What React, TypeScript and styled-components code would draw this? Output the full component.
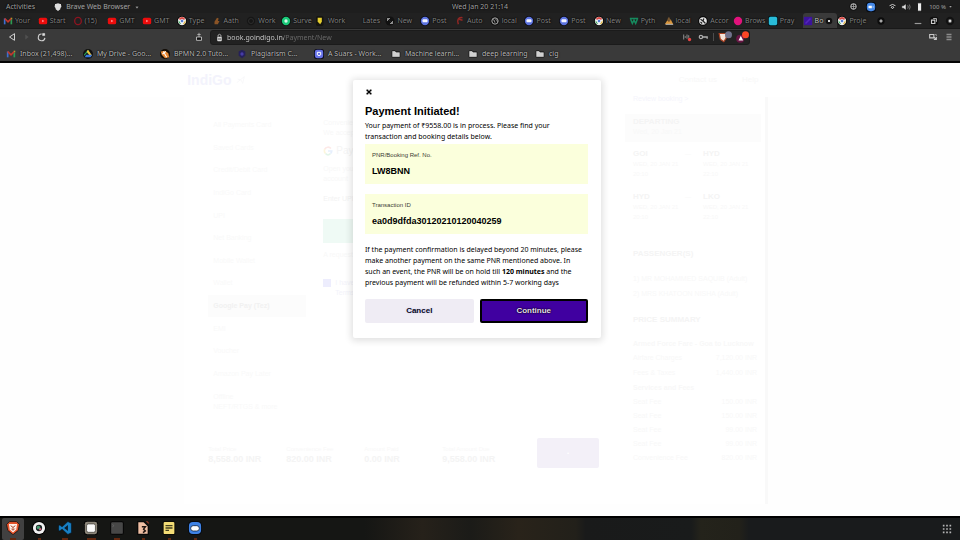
import React from 'react';
import styled, { createGlobalStyle } from 'styled-components';

const Global = createGlobalStyle`
  * { box-sizing: border-box; }
  body { margin: 0; background: #fff; font-family: "Liberation Sans", Arial, sans-serif; }
  button, input { font: inherit; color: inherit; border: 0; margin: 0; padding: 0; background: none; }
  button { cursor: pointer; }
  svg { display: block; flex: none; }
  h2, h3, p, ul, dl, dd, dt { margin: 0; padding: 0; }
  a { color: inherit; text-decoration: none; }
`;

const Screen = styled.div`
  min-height: 100vh;
  display: flex;
  flex-direction: column;
`;

/* ---------- desktop bar ---------- */
const DesktopBar = styled.header`
  height: 13px;
  display: grid;
  grid-template-columns: 1fr auto 1fr;
  align-items: center;
  padding: 0 6px;
  background: #1e1e1e;
  color: #a2a2a2;
  font: 7px/12px "Noto Sans", sans-serif;
  text-shadow: 0 0 2px #000, 0 0 1px #000;
`;
const BarGroup = styled.div<{ $gap: number; $end?: boolean }>`
  display: flex;
  align-items: center;
  gap: ${p => p.$gap}px;
  justify-content: ${p => (p.$end ? 'flex-end' : 'flex-start')};
`;
const AppMenu = styled.button`
  display: flex;
  align-items: center;
  gap: 3px;
`;
const BatteryMenu = styled(AppMenu)`
  && {
    gap: 1px;
    font-size: 6px;
  }
`;

/* ---------- browser ---------- */
const TabStrip = styled.nav`
  height: 16px;
  display: flex;
  align-items: stretch;
  padding-left: 3px;
  background: #212121;
  border-bottom: 1px solid #191919;
`;
const Tab = styled.button<{ $active?: boolean }>`
  && {
    flex: 1 1 0;
    min-width: 0;
    display: flex;
    align-items: center;
    gap: 2px;
    white-space: nowrap;
    border-radius: 3px 3px 0 0;
    background: ${p => (p.$active ? '#3a3a3a' : 'transparent')};
    color: ${p => (p.$active ? '#c4c4c4' : '#838383')};
    font: 7px/14px "Noto Sans", sans-serif;
    text-shadow: 0 0 2px #000, 0 0 1px #000;
  }
`;
const WindowControls = styled.div`
  flex: 0 0 88px;
  display: flex;
  align-items: center;
  justify-content: flex-end;
  gap: 6px;
  padding-right: 5px;
`;
const NewTab = styled.button`
  && {
    margin-right: auto;
    padding-left: 5px;
  }
`;
const AddressBar = styled.div`
  height: 16px;
  display: flex;
  align-items: center;
  background: #3a3a3a;
`;
const NavButtons = styled.div`
  flex: 0 1 210px;
  display: flex;
  align-items: center;
  gap: 5px;
  padding: 0 6px 0 7px;
`;
const SaveButton = styled.button`
  && { margin-left: auto; }
`;
const UrlField = styled.div`
  flex: 0 1 540px;
  height: 15px;
  display: flex;
  align-items: center;
  gap: 3px;
  padding: 0 0 0 4px;
  border-radius: 3px;
  background: #222;
  border: 1px solid #1b1b1b;
`;
const UrlInput = styled.input`
  && {
    flex: 1;
    min-width: 0;
    height: 13px;
    outline: 0;
    font: 7px/13px "Noto Sans", sans-serif;
    color: transparent;
    background: linear-gradient(90deg, #d0d0d0 57px, #6c6c6c 57px);
    background-clip: text;
  }
`;
const Divider = styled.span`
  width: 1px;
  height: 8px;
  margin: 0 1px 0 2px;
  background: #4d4d4d;
`;
const BrowserActions = styled.div`
  margin-left: auto;
  display: flex;
  gap: 6px;
  padding-right: 6px;
`;
const Bookmarks = styled.nav`
  height: 18px;
  display: flex;
  align-items: center;
  padding: 2px 0 0 6px;
  background: #3a3a3a;
  border-bottom: 2px solid #050505;
`;
const Bookmark = styled.a<{ $w: number }>`
  && {
    flex: 0 0 ${p => p.$w}px;
    display: flex;
    align-items: center;
    gap: 4px;
    white-space: nowrap;
    color: #bcbcbc;
    font: 7px/14px "Noto Sans", sans-serif;
    text-shadow: 0 0 2px #000, 0 0 1px #000;
  }
`;

/* ---------- web page behind the dialog ---------- */
const Page = styled.main`
  position: relative;
  flex: 1;
  display: flex;
  flex-direction: column;
  background: #fefefe;
  color: #f8f8f8;
  font-size: 7px;
  line-height: 10px;
`;
const SiteHeader = styled.div`
  height: 34px;
  display: flex;
  align-items: center;
  justify-content: space-between;
  padding: 0 21% 0 19.5%;
  background: #fff;
`;
const Logo = styled.a`
  && {
    display: flex;
    align-items: center;
    gap: 4px;
    color: #f3f3fc;
    font-size: 14px;
    font-weight: 700;
    line-height: 16px;
  }
`;
const SiteLinks = styled.div`
  display: flex;
  gap: 25px;
  font-size: 8px;
`;
const Columns = styled.div`
  flex: 1;
  display: flex;
  padding: 0 20% 12px 19.2%;
`;
const Booking = styled.section`
  flex: 1;
  display: flex;
  flex-direction: column;
  padding: 17px 21px 0 24px;
  background: #fff;
`;
const Payment = styled.div`
  display: grid;
  grid-template-columns: 98px 1fr;
  gap: 17px;
`;
const Methods = styled.ul`
  list-style: none;
  display: grid;
  grid-auto-rows: 1fr;
  min-height: 271px;
`;
const Method = styled.li<{ $on?: boolean }>`
  display: flex;
  align-items: center;
  padding-left: 5px;
  background: ${p => (p.$on ? '#fcfcfc' : 'transparent')};
  color: ${p => (p.$on ? '#f1f1f1' : '#f9f9f9')};
  font-weight: ${p => (p.$on ? 700 : 400)};
`;
const MethodNote = styled.p`
  && {
    padding: 7px 0 0 5px;
    color: #f9f9f9;
  }
`;
const PayPanel = styled.div`
  display: flex;
  flex-direction: column;
  align-items: flex-start;
  padding-top: 4px;
`;
const GPay = styled.div`
  display: flex;
  align-items: center;
  gap: 3px;
  height: 26px;
  color: #f5f5f5;
  font-size: 10px;
`;
const UpiLabel = styled.p`
  && {
    margin: 10px 0 15px;
    color: #f3f3f3;
  }
`;
const VerifyButton = styled.button`
  && {
    width: 108px;
    height: 24px;
    margin-bottom: 7px;
    background: #effaf5;
    color: #fff;
  }
`;
const Terms = styled.label`
  display: flex;
  gap: 4px;
  margin-top: 18px;
  color: #f3f3fa;
`;
const TermsBox = styled.input`
  && {
    appearance: none;
    width: 8px;
    height: 8px;
    margin-top: 1px;
    background: #ededfd;
  }
`;
const Totals = styled.div`
  display: grid;
  grid-template-columns: 78px 78px 78px 1fr 62px;
  align-items: center;
  margin-top: 26px;
  font-size: 6px;
  line-height: 9px;
`;
const TotalValue = styled.strong`
  display: block;
  color: #f4f4f4;
  font-size: 9px;
  line-height: 10px;
`;
const Total = styled.div`
  padding-top: 2px;
`;
const PayButton = styled.button`
  && {
    height: 30px;
    border-radius: 2px;
    background: #f3f0f8;
    color: #fff;
  }
`;
const Sidebar = styled.aside`
  flex: 0 0 148px;
  padding: 0 4px 0 5px;
  background: #fff;
  border-right: 3px solid #f9f9f9;
`;
const Inset = styled.div<{ $top: number }>`
  padding: 0 4px 0 8px;
  margin-top: ${p => p.$top}px;
`;
const SidebarLink = styled.a`
  && { color: #f5f5fc; }
`;
const Departing = styled.div`
  margin-top: 10px;
  padding: 3px 8px 5px;
  background: #fcfcfc;
`;
const Heading = styled.h3`
  && {
    color: #f4f4f4;
    font-size: 8px;
    line-height: 10px;
  }
`;
const Leg = styled.div<{ $top: number }>`
  display: grid;
  grid-template-columns: 52px 18px 1fr;
  padding-left: 8px;
  margin-top: ${p => p.$top}px;
  font-size: 6px;
`;
const Line = styled.div<{ $h: number }>`
  display: flex;
  justify-content: space-between;
  white-space: nowrap;
  font-size: 7px;
  line-height: ${p => p.$h}px;
`;

/* ---------- dialog ---------- */
const Overlay = styled.div`
  position: absolute;
  inset: 0;
  display: flex;
  justify-content: center;
  align-items: flex-start;
  padding: 17px 6px 0 0;
`;
const Dialog = styled.div`
  width: 248px;
  padding: 8px 13px 15px 12px;
  background: #fff;
  border-radius: 2px;
  box-shadow: 0 1px 7px 2px rgba(0, 0, 0, 0.12);
  color: #000;
`;
const CloseButton = styled.button`
  && {
    display: block;
    width: 8px;
    height: 8px;
  }
`;
const Title = styled.h2`
  && {
    margin-top: 8px;
    font-size: 11px;
    line-height: 14px;
  }
`;
const Copy = styled.p<{ $top: number }>`
  && {
    margin-top: ${p => p.$top}px;
    padding-right: 4px;
    font: 7px/11px "Noto Sans", sans-serif;
  }
`;
const Detail = styled.div<{ $top: number }>`
  margin-top: ${p => p.$top}px;
  height: 40px;
  padding: 6px 7px;
  background: #fbffdc;
`;
const DetailLabel = styled.p`
  && {
    color: #3c3c34;
    font-size: 6px;
    line-height: 10px;
  }
`;
const DetailValue = styled.p`
  && {
    margin-top: 5px;
    font-size: 9px;
    font-weight: 700;
    line-height: 12px;
  }
`;
const Actions = styled.div`
  display: grid;
  grid-template-columns: 1fr 1fr;
  gap: 6px;
  margin-top: 11px;
`;
const ActionButton = styled.button<{ $primary?: boolean }>`
  && {
    height: 24px;
    border-radius: 2px;
    border: ${p => (p.$primary ? '2px solid #000' : '0')};
    background: ${p => (p.$primary ? '#4000a0' : '#efecf4')};
    color: ${p => (p.$primary ? '#e4dcf2' : '#080818')};
    text-shadow: ${p => (p.$primary ? '0 0 2px #000, 0 0 1px #000' : '0 0 2px #c8c8ff')};
    font-size: 8px;
    font-weight: 700;
    line-height: 12px;
  }
`;

/* ---------- dock ---------- */
const Dock = styled.footer`
  height: 24px;
  display: flex;
  align-items: stretch;
  gap: 4px;
  padding: 0 8px 0 2px;
  border-top: 2px solid #000;
  background: linear-gradient(90deg, #151614 38%, #26211a 44%, #1b1b18 49%, #29231a 54%, #22201a 60%, #191a1a 61%, #191b1b 72%, #24231b 73%, #22211a 77%, #191b1c 78%);
`;
const DockItem = styled.button<{ $on?: boolean }>`
  && {
    width: 22px;
    display: flex;
    flex-direction: column;
    align-items: center;
    justify-content: space-between;
    padding-top: 3px;
    background: ${p => (p.$on ? '#414141' : 'transparent')};
    border-radius: 2px;
  }
`;
const Dots = styled.span<{ $n: number }>`
  width: ${p => p.$n * 3}px;
  height: 2px;
  background: #63270f;
`;
const DockEnd = styled.button`
  && { margin-left: auto; }
`;

/* ---------- icons ---------- */
const Icon = ({ name, size = 10 }: { name: string; size?: number }) => (
  <svg width={size} height={size} viewBox="0 0 12 12" fill="none" aria-hidden="true">
    {shapes[name]}
  </svg>
);

const shapes: Record<string, React.ReactNode> = {
  gmail: <><path d="M2 10V3" stroke="#3d6fd0" strokeWidth="2" /><path d="M10 10V3" stroke="#2e9a52" strokeWidth="2" /><path d="M2 3l4 4 4-4" stroke="#c5362c" strokeWidth="2" /><path d="M9 2h2v2z" fill="#e6b32b" /></>,
  youtube: <><rect x="1" y="2" width="10" height="8" rx="2" fill="#ed0c0c" /><path d="M5 4.4v3.2L7.6 6z" fill="#ff9a9a" /></>,
  opera: <ellipse cx="6" cy="6" rx="4" ry="4.4" stroke="#8c1420" strokeWidth="1.6" />,
  chrome: <><circle cx="6" cy="6" r="6" fill="#000" /><circle cx="6" cy="6" r="5" fill="#f0f0f0" /><path d="M2 4a4.4 4.4 0 018-.2L6 5z" fill="#d84a45" /><path d="M2 5l3 5a4.4 4.4 0 01-3-5z" fill="#39a35a" /><path d="M7 10l3-5c1 3-1 5-3 5z" fill="#e3b73f" /><circle cx="6" cy="6" r="2" fill="#567fd4" stroke="#fff" strokeWidth=".7" /></>,
  drive: <><circle cx="6" cy="6" r="6" fill="#111" /><path d="M6 1l2.500 4H4L2 8 1 7z" fill="#2da45a" /><path d="M6 1l5 7H8L4.500 3z" fill="#ecc13b" /><path d="M2 10l1.800-3H11l-1.800 3z" fill="#3a78db" /></>,
  hand: <path d="M3 10V7l3-5 2 1-1 3h2l-2 4z" fill="#8b5426" />,
  dark: <><circle cx="6" cy="6" r="5" fill="#161616" /><circle cx="6" cy="6" r="3" stroke="#303030" /></>,
  green: <><circle cx="6" cy="6" r="6" fill="#0b120e" /><circle cx="6" cy="6" r="5" fill="#19c878" /><circle cx="6" cy="6" r="2" fill="#d5f8e8" /></>,
  yellow: <><rect width="9" height="12" rx="2" fill="#151510" /><path d="M2 2h5v5L5 10 2 7z" fill="#e6cf2f" /></>,
  none: null,
  arrows: <><circle cx="6" cy="6" r="5.500" fill="#111" /><path d="M3 6V3h3M9 6v3H6M3 3l2 2M9 9L7 7" stroke="#aaa" /></>,
  zoom: <><circle cx="6" cy="6" r="6" fill="#0a0a14" /><circle cx="6" cy="6" r="5" fill="#5b72df" /><rect x="3" y="4" width="6" height="3.500" rx="1" fill="#f4f5ff" /></>,
  red: <path d="M9 2C4 1 2 5 4 10M5 4l4 1" stroke="#942724" strokeWidth="1.800" />,
  globe: <><circle cx="6" cy="6" r="5.500" fill="#0d0d0d" /><circle cx="6" cy="6" r="3.800" stroke="#aaa" strokeWidth="1.200" /><path d="M3 4l2 1 1 3M6 3l2 2 1 2" stroke="#aaa" /></>,
  teal: <path d="M1 3h10M2 4l2 5 2-4 2 4 2-5" stroke="#168a5e" strokeWidth="1.800" />,
  cloud: <><path d="M1 10l3-5 2 2 2-3 3 6z" fill="#d7953d" /><path d="M6 1l2 4-2 2-2-3z" fill="#7a5932" /><path d="M2 10h9" stroke="#cfcfcf" /></>,
  ball: <><circle cx="6" cy="6" r="6" fill="#0a0a0a" /><circle cx="6" cy="6" r="4.600" fill="#e5e5e5" /><path d="M3 4l3 2 1-3M6 6l3 3M5 9L3 7" stroke="#222" strokeWidth="1.500" /></>,
  pink: <circle cx="6" cy="6" r="5" fill="#e2127c" />,
  cyan: <><rect width="12" height="12" rx="2" fill="#05191d" /><rect x="1" y="1" width="10" height="10" rx="2" fill="#29bcd9" /></>,
  indigo: <><rect x="1" y="1" width="10" height="10" fill="#3c139c" /><path d="M3 9l6-6" stroke="#5426bb" strokeWidth="2" /></>,
  orange: <><circle cx="6" cy="6" r="6" fill="#120c06" /><path d="M1 3l5-1 4 3 1 5-5 1-4-4z" fill="#e88732" /><path d="M4 3l4 7M3 6l4-3" stroke="#fff" strokeWidth="1.300" /></>,
  purple: <><path d="M6 1l4 2v5l-4 3-4-3V3z" fill="#25205b" /><circle cx="6" cy="6" r="2" fill="#473ca8" /></>,
  app: <><rect width="12" height="12" rx="3" fill="#0a0a18" /><rect x="1" y="1" width="10" height="10" rx="2.500" fill="#6672e8" /><path d="M4 4v3q2 2 4 0V4z" stroke="#fff" strokeWidth="1.200" /></>,
  folder: <path d="M1 3q0-1 1-1h3l1 1.500h4q1 0 1 1V9q0 1-1 1H2q-1 0-1-1z" fill="#d0d0d0" stroke="#0c0c0c" strokeWidth="1" />,
  shield: <path d="M6 1l4 1 .6 3L9 9l-3 2.500L3 9 1.400 5 2 2z" fill="#dedede" stroke="#080808" />,
  caret: <path d="M3 5h6L6 8.500z" fill="#d0d0d0" stroke="#0a0a0a" />,
  wheel: <><circle cx="6" cy="6" r="5.500" fill="#111" /><circle cx="6" cy="6" r="3.500" stroke="#a8a8a8" strokeWidth="1.400" /><path d="M2 6h8M6 2v8" stroke="#a8a8a8" /></>,
  zoomBar: <><rect width="12" height="12" rx="4" fill="#060a10" /><rect x="1" y="1" width="10" height="10" rx="4" fill="#4589e8" /><path d="M3 4.500h4v3H3zM7.500 6L9 5v2z" fill="#fff" /></>,
  zoomDock: <><rect width="12" height="12" rx="4" fill="#060a10" /><rect x=".8" y=".8" width="10.400" height="10.400" rx="3.500" fill="#3f83e6" /><rect x="2.300" y="4" width="7.400" height="4.600" rx="2.200" fill="#fff" stroke="#10243f" strokeWidth=".7" /></>,
  wifi: <><path d="M1 5q5-5 10 0L6 11z" fill="#0b0b0b" /><path d="M2 5q4-3.500 8 0M4 7q2-1.500 4 0L6 9z" stroke="#ddd" strokeWidth="1.300" /></>,
  sound: <><path d="M1 4.500h2L6 2v8L3 7.500H1z" fill="#e5e5e5" stroke="#080808" strokeWidth=".6" /><path d="M8 4q1.500 2 0 4M10 3q2 3 0 6" stroke="#858585" /></>,
  battery: <rect x="3" y="1" width="5" height="10" rx="1" fill="#eee" stroke="#080808" />,
  close: <><circle cx="6" cy="6" r="5" fill="#111" /><path d="M4.500 4.500l3 3M7.500 4.500l-3 3" stroke="#ddd" strokeWidth="1.500" /></>,
  plus: <><circle cx="6" cy="6" r="5.500" fill="#0c0c0c" /><path d="M6 3.500v5M3.500 6h5" stroke="#ddd" strokeWidth="1.500" /></>,
  minimise: <path d="M2 9h8" stroke="#999" strokeWidth="1.400" />,
  restore: <><rect x="1" y="1" width="10" height="10" rx="3" fill="#101010" /><path d="M3 5h4v4H3z" stroke="#ccc" strokeWidth="1.400" /><path d="M5 3h4v4" stroke="#ccc" /></>,
  back: <path d="M9 2v8L3 6z" stroke="#d0d0d0" strokeWidth="1.200" />,
  forward: <path d="M4 3v6l4-3z" fill="#505050" />,
  reload: <><path d="M9.500 7A4 4 0 116 2.500" stroke="#d0d0d0" strokeWidth="1.300" /><path d="M6 1h4v4H6z" fill="#ddd" stroke="#111" strokeWidth=".6" /></>,
  save: <><path d="M6 1v5M4 3h4" stroke="#b8b8b8" /><path d="M3 6h6v4H3z" stroke="#ccc" fill="#111" /></>,
  lock: <><path d="M4 5V3q2-2.500 4 0v2" stroke="#bbb" strokeWidth="1.200" /><rect x="3" y="5" width="6" height="6" rx="1" fill="#d8d8d8" /><path d="M4 8h4" stroke="#222" /></>,
  noSound: <><path d="M2 3v6M4 5v2M6 3v5M8 4v3" stroke="#858585" strokeWidth="1.300" /><circle cx="9" cy="9" r="2" fill="#e84444" /></>,
  key: <><circle cx="3.500" cy="6" r="2" stroke="#b0b0b0" strokeWidth="1.400" /><path d="M5 6h6v2" stroke="#b0b0b0" strokeWidth="1.600" /></>,
  brave: <><path d="M1 3h6v4L5 10 2 8z" fill="#f4e3d9" stroke="#aa4223" /><circle cx="9" cy="4" r="3" fill="#70728b" /></>,
  reward: <><circle cx="4.500" cy="7.500" r="3.500" fill="#681544" /><path d="M3 9l2-4 2 4z" fill="#fff" /><circle cx="9" cy="4" r="3" fill="#fb4626" /></>,
  share: <><path d="M2 3h5v4H2zM7 6l3 3M7 9h3V6" stroke="#c8c8c8" strokeWidth="1.300" /><path d="M8 3h2v2" stroke="#999" /></>,
  menu: <path d="M3 3h6M3 6h6M3 9h6" stroke="#8c8c8c" strokeWidth="1.700" />,
  dialogClose: <><rect x="2" y="2" width="8" height="8" fill="#ddd" /><path d="M2.500 2.500l7 7M9.500 2.500l-7 7" stroke="#000" strokeWidth="2" /></>,
  g: <><path d="M9.500 3A4.500 4.500 0 002 4" stroke="#fde9e8" strokeWidth="2" /><path d="M2 4q-1 3 1 5" stroke="#fdf6dc" strokeWidth="2" /><path d="M3 9q3 3 6 0" stroke="#e3f5e9" strokeWidth="2" /><path d="M6 6h4.500q0 2-1.500 3" stroke="#e6effd" strokeWidth="2" /></>,
  plane: <path d="M1 9l9-7-2 8-2-4-4-1" stroke="#f6f6f9" />,
  braveDock: <><path d="M3 .5h6L11.500 3l-1 5L6 11.700 1.500 8l-1-5z" fill="#e4532b" stroke="#080808" strokeWidth=".6" /><path d="M2.500 2.500h7l-.7 4.700L6 9.800 3.200 7.200z" fill="#fff2ec" /><path d="M4 4l2 1.500L8 4M6 5.500v2M4.500 6.500L6 8l1.500-1.500" stroke="#a63c20" strokeWidth=".8" /></>,
  ringDock: <><circle cx="6" cy="6" r="6" fill="#000" /><circle cx="6" cy="6" r="5.200" fill="#f2f2f2" /><circle cx="6" cy="6" r="2.700" fill="#1d2326" /><circle cx="5.500" cy="5.500" r="1.500" fill="#4a9b72" /><circle cx="7" cy="7" r="1" fill="#c9647a" /></>,
  code: <><path d="M8.500.5L11.500 2v8l-3 1.500L3.500 7 1.500 8.500.5 8V4l1-.5L3.500 5z" fill="#187fc4" stroke="#04121d" strokeWidth=".5" /><path d="M8.500 3.500v5L5.300 6z" fill="#0b1d2b" /></>,
  files: <><rect width="12" height="12" rx="2" fill="#050505" /><rect x=".7" y=".7" width="10.600" height="10.600" rx="2" fill="#8d877b" /><rect x="2.200" y="2.500" width="7.600" height="7.200" rx="1.500" fill="#fafafa" stroke="#3b3934" strokeWidth=".6" /></>,
  terminal: <><rect x=".5" y=".5" width="11" height="11" rx="1.500" fill="#474747" stroke="#080808" /><path d="M2 3l1.500 1L2 5" stroke="#656565" strokeWidth=".7" /></>,
  doc: <><path d="M1 0h6l4 4v8H1z" fill="#080808" /><path d="M2 1h4.500L10 4.500V11H2z" fill="#f0bfa4" /><path d="M5 5h3L6.500 7 8 8.500 6 10" stroke="#201410" strokeWidth="1.300" /><path d="M9 0l2 2" stroke="#8f3320" /></>,
  notes: <><rect x=".5" width="11" height="12" rx="1.500" fill="#0c0b05" /><rect x="1.400" y=".8" width="9.200" height="10.400" rx="1" fill="#f3dc76" /><path d="M3 4h6M3 6h6M3 8h3" stroke="#44401f" strokeWidth="1.100" /></>,
  grid: <path d="M1 2h2M5 2h2M9 2h2M1 6h2M5 6h2M9 6h2M1 10h2M5 10h2M9 10h2" stroke="#b5b5b5" strokeWidth="2" />,
};

const tabs: [string, string][] = [
  ['gmail', 'Your'], ['youtube', 'Start'], ['opera', '(15)'], ['youtube', 'GMT'], ['youtube', 'GMT'],
  ['chrome', 'Type'], ['hand', 'Aath'], ['dark', 'Work'], ['green', 'Surve'], ['yellow', 'Work'],
  ['none', 'Lates'], ['arrows', 'New'], ['zoom', 'Post'], ['red', 'Auto'], ['globe', 'local'],
  ['zoom', 'Post'], ['zoom', 'Post'], ['chrome', 'New'], ['teal', 'Pyth'], ['cloud', 'local'],
  ['ball', 'Accor'], ['pink', 'Brows'], ['cyan', 'Pray'], ['indigo', 'Bo'], ['chrome', 'Proje'],
];
const bookmarks: [string, string, number][] = [
  ['gmail', 'Inbox (21,498)...', 77], ['drive', 'My Drive - Goo...', 77], ['orange', 'BPMN 2.0 Tuto...', 77],
  ['purple', 'Plagiarism C...', 77], ['app', 'A Suars - Work...', 77], ['folder', 'Machine learni...', 77],
  ['folder', 'deep learning', 67], ['folder', 'cig', 30],
];
const methods = ['All Payments Card', 'Saved Cards', 'Credit/Debit Card', 'IndiGo Card', 'UPI', 'Net Banking', 'Mobile Wallet', 'Wallet', 'Google Pay (Tez)', 'EMI', 'Voucher', 'Amazon Pay Later'];
const fares: [string, string][] = [['Seat Fee', '150.00 INR'], ['Seat Fee', '150.00 INR'], ['Seat Fee', '99.00 INR'], ['Seat Fee', '99.00 INR'], ['Convenience Fee', '820.00 INR']];
const totals: [string, string][] = [['Total Price', '8,558.00 INR'], ['Convenience Fee', '820.00 INR'], ['Amount Paid', '0.00 INR'], ['Total Amount Due', '9,558.00 INR']];
const dock: [string, string, number][] = [
  ['braveDock', 'Brave', 2], ['ringDock', 'Media', 1], ['code', 'Code editor', 2], ['files', 'Files', 3],
  ['terminal', 'Terminal', 2], ['doc', 'Documents', 1], ['notes', 'Notes', 1], ['zoomDock', 'Zoom', 1],
];

const FlightLeg = ({ from, to, top }: { from: string; to: string; top: number }) => (
  <Leg $top={top}>
    <div><Heading>{from}</Heading>WED, 20 JAN 21<br />20:10</div>
    <span>—</span>
    <div><Heading>{to}</Heading>WED, 20 JAN 21<br />22:10</div>
  </Leg>
);

export default function App() {
  return (
    <Screen>
      <Global />
      <DesktopBar>
        <BarGroup $gap={18}>
          <span>Activities</span>
          <AppMenu><Icon name="shield" size={10} /> Brave Web Browser <Icon name="caret" size={8} /></AppMenu>
        </BarGroup>
        <span>Wed Jan 20 21:14</span>
        <BarGroup $gap={4} $end>
          <Icon name="wheel" size={9} />
          <span />
          <Icon name="zoomBar" size={10} />
          <span /><span />
          <Icon name="wifi" size={9} />
          <Icon name="sound" size={10} />
          <Icon name="battery" size={10} />
          <BatteryMenu>100 % <Icon name="caret" size={7} /></BatteryMenu>
        </BarGroup>
      </DesktopBar>

      <TabStrip>
        {tabs.map(([icon, label], i) => (
          <Tab key={i} $active={label === 'Bo'}>
            <Icon name={icon} />
            <span>{label}</span>
            {label === 'Bo' && <Icon name="close" size={8} />}
          </Tab>
        ))}
        <WindowControls>
          <NewTab aria-label="New tab"><Icon name="plus" size={8} /></NewTab>
          <button aria-label="Minimise"><Icon name="minimise" /></button>
          <button aria-label="Restore"><Icon name="restore" /></button>
          <button aria-label="Close"><Icon name="close" /></button>
        </WindowControls>
      </TabStrip>

      <AddressBar>
        <NavButtons>
          <button aria-label="Back"><Icon name="back" /></button>
          <button aria-label="Forward"><Icon name="forward" /></button>
          <button aria-label="Reload"><Icon name="reload" /></button>
          <SaveButton aria-label="Bookmark"><Icon name="save" /></SaveButton>
        </NavButtons>
        <UrlField>
          <Icon name="lock" size={9} />
          <UrlInput aria-label="Address" defaultValue="book.goindigo.in/Payment/New" />
          <Icon name="noSound" />
          <span />
          <Icon name="key" />
          <Divider />
          <Icon name="brave" size={14} />
          <Icon name="reward" size={14} />
        </UrlField>
        <BrowserActions>
          <button aria-label="Share"><Icon name="share" /></button>
          <button aria-label="Menu"><Icon name="menu" /></button>
        </BrowserActions>
      </AddressBar>

      <Bookmarks>
        {bookmarks.map(([icon, label, w]) => (
          <Bookmark key={label} href="#" $w={w}><Icon name={icon} />{label}</Bookmark>
        ))}
      </Bookmarks>

      <Page>
        <SiteHeader>
          <Logo href="#">IndiGo <Icon name="plane" /></Logo>
          <SiteLinks><a href="#">Contact us</a><a href="#">Help</a></SiteLinks>
        </SiteHeader>
        <Columns>
          <Booking>
            <Payment>
              <div>
                <Methods>
                  {methods.map(m => <Method key={m} $on={m.startsWith('Google')}>{m}</Method>)}
                </Methods>
                <MethodNote>Offline<br />NEFT/RTGS &amp; more</MethodNote>
              </div>
              <PayPanel>
                <p>Convenient<br />We accept</p>
                <GPay><Icon name="g" /> Pay</GPay>
                <p>Open your<br />account</p>
                <UpiLabel>Enter UPI</UpiLabel>
                <VerifyButton>Verify</VerifyButton>
                <p>A request</p>
                <Terms><TermsBox type="checkbox" /><span>I have<br />Terms</span></Terms>
              </PayPanel>
            </Payment>
            <Totals>
              {totals.map(([label, value]) => <Total key={label}>{label}<TotalValue>{value}</TotalValue></Total>)}
              <PayButton>•</PayButton>
            </Totals>
          </Booking>
          <Sidebar>
            <Inset $top={-3}><SidebarLink href="#">Review booking &gt;</SidebarLink></Inset>
            <Departing><Heading>DEPARTING</Heading>Wed, 20 Jan 21</Departing>
            <FlightLeg from="GOI" to="HYD" top={7} />
            <FlightLeg from="HYD" to="LKO" top={13} />
            <Inset $top={27}>
              <Heading>PASSENGER(S)</Heading>
            </Inset>
            <Inset $top={12}>
              <Line $h={15}>1) MR MOHAMMED SAQUIB (Adult)</Line>
              <Line $h={15}>2) MRS KHATOON NISHA (Adult)</Line>
            </Inset>
            <Inset $top={14}><Heading>PRICE SUMMARY</Heading></Inset>
            <Inset $top={12}>
              <Line $h={14}><strong>Armed Force Fare - Goa to Lucknow</strong></Line>
              <Line $h={14}><span>Airfare Charges</span><span>7,120.00 INR</span></Line>
              <Line $h={15}><span>Fees &amp; Taxes</span><span>1,440.00 INR</span></Line>
              <Line $h={15}><strong>Services and Fees</strong></Line>
              {fares.map(([label, value], i) => <Line key={i} $h={14}><span>{label}</span><span>{value}</span></Line>)}
            </Inset>
          </Sidebar>
        </Columns>

        <Overlay>
          <Dialog role="dialog" aria-labelledby="dialog-title">
            <CloseButton aria-label="Close dialog"><Icon name="dialogClose" size={8} /></CloseButton>
            <Title id="dialog-title">Payment Initiated!</Title>
            <Copy $top={2}>Your payment of ₹9558.00 is in process. Please find your transaction and booking details below.</Copy>
            <Detail $top={2}>
              <DetailLabel>PNR/Booking Ref. No.</DetailLabel>
              <DetailValue>LW8BNN</DetailValue>
            </Detail>
            <Detail $top={10}>
              <DetailLabel>Transaction ID</DetailLabel>
              <DetailValue>ea0d9dfda30120210120040259</DetailValue>
            </Detail>
            <Copy $top={10}>
              If the payment confirmation is delayed beyond 20 minutes, please make another payment on the same PNR mentioned above. In such an event, the PNR will be on hold till <strong>120 minutes</strong> and the previous payment will be refunded within 5-7 working days
            </Copy>
            <Actions>
              <ActionButton>Cancel</ActionButton>
              <ActionButton $primary>Continue</ActionButton>
            </Actions>
          </Dialog>
        </Overlay>
      </Page>

      <Dock>
        {dock.map(([icon, label, n], i) => (
          <DockItem key={icon} $on={i === 0} aria-label={label}>
            <Icon name={icon} size={14} />
            <Dots $n={n} />
          </DockItem>
        ))}
        <DockEnd aria-label="Show applications"><Icon name="grid" /></DockEnd>
      </Dock>
    </Screen>
  );
}
